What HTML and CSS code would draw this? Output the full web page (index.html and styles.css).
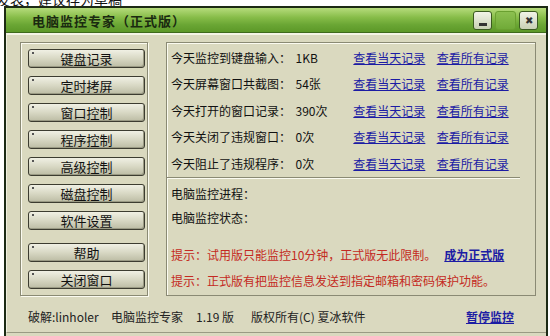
FILE: index.html
```html
<!DOCTYPE html>
<html lang="zh-CN">
<head>
    <meta charset="UTF-8">
    <title>电脑监控专家（正式版）</title>
    <link rel="stylesheet" href="styles.css">
</head>
<body>
    <!-- page behind the window -->
    <div class="behind"><span>发表，建议存为草稿</span></div>

    <div class="window">
        <!-- title bar -->
        <div class="titlebar">
            <span class="title">电脑监控专家（正式版）</span>
            <div class="winbtns">
                <div class="wbtn"><span class="minbar"></span></div>
                <div class="wbtn blank"></div>
                <div class="wbtn">&#x2716;</div>
            </div>
        </div>

        <div class="client">
            <div class="main">
                <!-- left menu -->
                <div class="menu">
                    <div class="btn">键盘记录</div>
                    <div class="btn">定时拷屏</div>
                    <div class="btn">窗口控制</div>
                    <div class="btn">程序控制</div>
                    <div class="btn">高级控制</div>
                    <div class="btn">磁盘控制</div>
                    <div class="btn">软件设置</div>
                    <div class="btn gap">帮助</div>
                    <div class="btn">关闭窗口</div>
                </div>

                <!-- right info -->
                <div class="info">
                    <div class="stats">
                        <div class="row"><span class="lbl">今天监控到键盘输入：</span><span class="val">1KB</span><a>查看当天记录</a><a>查看所有记录</a></div>
                        <div class="row"><span class="lbl">今天屏幕窗口共截图：</span><span class="val">54张</span><a>查看当天记录</a><a>查看所有记录</a></div>
                        <div class="row"><span class="lbl">今天打开的窗口记录：</span><span class="val">390次</span><a>查看当天记录</a><a>查看所有记录</a></div>
                        <div class="row"><span class="lbl">今天关闭了违规窗口：</span><span class="val">0次</span><a>查看当天记录</a><a>查看所有记录</a></div>
                        <div class="row"><span class="lbl">今天阻止了违规程序：</span><span class="val">0次</span><a>查看当天记录</a><a>查看所有记录</a></div>
                    </div>
                    <div class="status">
                        <div class="line">电脑监控进程：</div>
                        <div class="line">电脑监控状态：</div>
                        <div class="tip first">提示：试用版只能监控10分钟，正式版无此限制。<a class="strong">成为正式版</a></div>
                        <div class="tip">提示：正式版有把监控信息发送到指定邮箱和密码保护功能。</div>
                    </div>
                </div>
            </div>

            <!-- footer -->
            <div class="footer">
                <div class="credits">
                    <span class="crack">破解:linholer</span>
                    <span class="name">电脑监控专家</span>
                    <span class="ver">1.19 版</span>
                    <span>版权所有(C) 夏冰软件</span>
                </div>
                <a class="strong">暂停监控</a>
            </div>
        </div>
    </div>
</body>
</html>
```

FILE: styles.css
```css
/* Old XP-style green skin */
body {
    margin: 0;
    background: #fff;
    font-family: "SimSun", "Noto Sans CJK SC", sans-serif;
    font-size: 12px;
    color: #111;
    overflow: hidden;
}
.behind {
    height: 6px;
    overflow: hidden;
    font-size: 14px;
    line-height: 14px;
}
.behind span {
    display: block;
    margin-top: -8px;
    margin-left: -4px;
}
.window {
    margin-left: 4px;
    width: 540px;
    border: 2px solid #1c2a14;
    border-bottom: none;
    background: #dad9bf;
    padding-bottom: 6px;
}
.titlebar {
    height: 25px;
    background: linear-gradient(#b6dc7c, #86bc48 40%, #6aa634 70%, #5c9828);
    border-bottom: 1px solid #3e6a1c;
    display: flex;
    align-items: center;
    justify-content: space-between;
    padding: 0 8px 0 26px;
    box-sizing: border-box;
}
.title {
    font-weight: bold;
    font-size: 13px;
    color: #1a2a10;
    letter-spacing: 1px;
}
.winbtns {
    display: flex;
    gap: 3px;
}
.wbtn {
    width: 19px;
    height: 19px;
    border: 1px solid #3a5a20;
    border-radius: 3px;
    background: linear-gradient(#f2f4e8, #c8d0b4);
    font-size: 10px;
    color: #333;
    display: flex;
    align-items: flex-end;
    justify-content: center;
    padding-bottom: 2px;
    box-sizing: border-box;
}
.wbtn.blank {
    width: 21px;
    border-color: #6aa030;
    background: linear-gradient(#8cc050, #70aa38);
}
.minbar {
    width: 8px;
    height: 3px;
    background: #333;
    margin-bottom: 1px;
}
.client {
    height: 300px;
    box-sizing: border-box;
    border-top: 2px solid #f4f4e6;
    border-left: 1px solid #f0f0e0;
    border-bottom: 1px solid #9a9a84;
    padding: 7px 10px 0 13px;
}
.main {
    display: flex;
    gap: 18px;
}
.menu {
    width: 128px;
    height: 254px;
    border: 1px solid #8a8a74;
    box-shadow: 1px 1px 0 #fbfbf0, inset 1px 1px 0 #fbfbf0;
    padding: 6px 0 0 7px;
    box-sizing: border-box;
    display: flex;
    flex-direction: column;
    gap: 8px;
}
.btn {
    position: relative;
    width: 115px;
    height: 17px;
    flex: none;
    border: 1px solid #3c3c30;
    border-radius: 3px;
    background: linear-gradient(#f0f0e4, #d8d8c4 50%, #bcbca4);
    box-shadow: inset -1px -1px 0 #9a9a84;
    text-align: center;
    line-height: 17px;
    font-size: 13px;
}
.btn::before {
    content: "";
    position: absolute;
    left: 3px;
    top: 2px;
    width: 2px;
    height: 2px;
    background: #555;
}
.btn.gap {
    margin-top: 5px;
}
.info {
    width: 370px;
    height: 254px;
    border: 1px solid #8a8a74;
    box-shadow: inset 1px 1px 0 #fbfbf0;
    box-sizing: border-box;
    display: flex;
    flex-direction: column;
}
.stats {
    width: 353px;
    height: 135px;
    border-bottom: 1px solid #8a8a74;
    box-shadow: 0 1px 0 #fbfbf0;
    padding: 1px 0 0 4px;
    box-sizing: border-box;
}
.row {
    display: flex;
    height: 26.5px;
    align-items: center;
}
.lbl {
    width: 127px;
}
.val {
    width: 59px;
}
.row a {
    width: 85px;
}
a {
    color: #1c1ca4;
    text-decoration: underline;
}
a.strong {
    font-weight: bold;
}
.status {
    padding: 4px 0 0 4px;
}
.line {
    height: 24px;
    line-height: 24px;
}
.tip {
    color: #c42a22;
    height: 26px;
    line-height: 26px;
}
.tip.first {
    margin-top: 12px;
}
.tip a {
    margin-left: 8px;
}
.footer {
    display: flex;
    justify-content: space-between;
    padding: 14px 22px 0 8px;
    line-height: 14px;
    color: #222;
}
.credits {
    display: flex;
}
.crack {
    width: 83px;
}
.name {
    width: 85px;
}
.ver {
    width: 55px;
}
```
